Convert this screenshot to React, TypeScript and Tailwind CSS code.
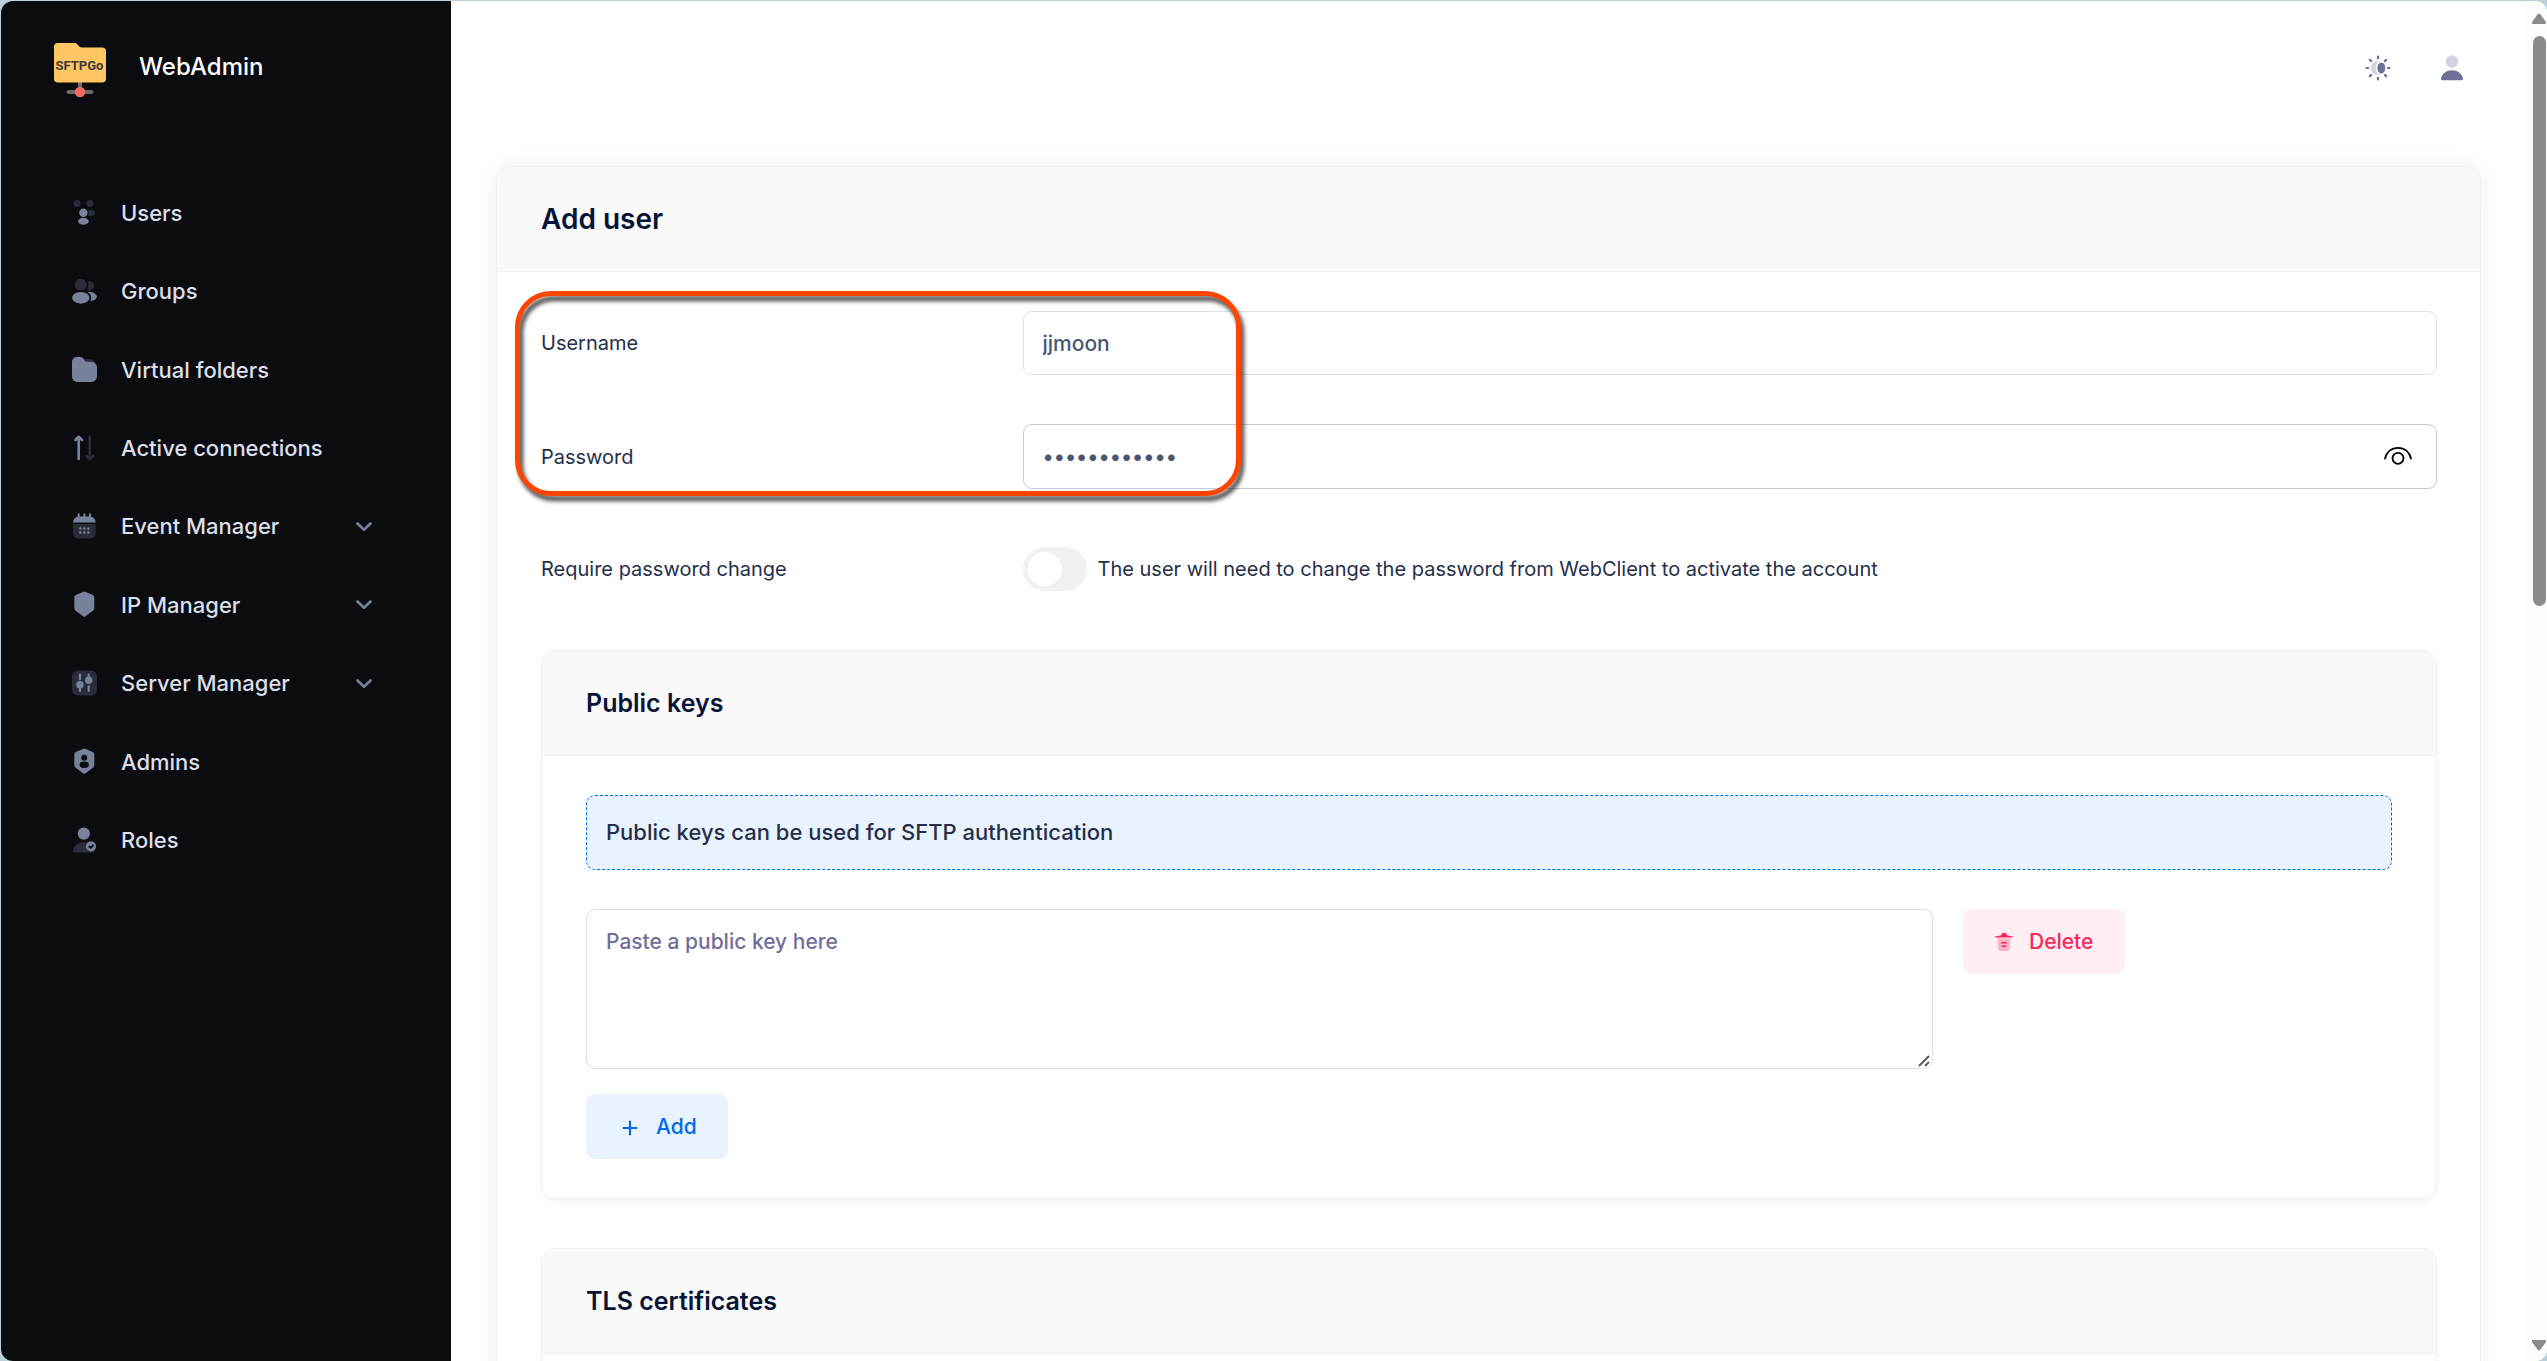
import { useId, type ReactNode } from "react";

const LIGHT = "#78829d";
const DARK = "#2b2c3a";
const SIDEBAR = "#0b0c10";

function NavSvg({ children }: { children: ReactNode }) {
  return (
    <svg className="mb-0.5 h-[26px] w-[26px] shrink-0" viewBox="0 0 26 26" fill={LIGHT} aria-hidden="true">
      {children}
    </svg>
  );
}

const UsersIcon = () => (
  <NavSvg>
    <circle cx="6" cy="4.6" r="3.5" fill={DARK} />
    <circle cx="19" cy="4.6" r="3.5" fill={DARK} />
    <ellipse cx="19.6" cy="14" rx="4.6" ry="3.1" fill={DARK} />
    <circle cx="12.4" cy="13.8" r="4.8" stroke={SIDEBAR} strokeWidth="1.2" />
    <ellipse cx="12.4" cy="22.2" rx="5.3" ry="3.5" />
  </NavSvg>
);

const GroupsIcon = () => (
  <NavSvg>
    <circle cx="18.6" cy="7.8" r="4.6" fill={DARK} />
    <circle cx="9.8" cy="6.8" r="6.8" fill={DARK} stroke={SIDEBAR} strokeWidth="1.6" />
    <ellipse cx="19" cy="18.6" rx="6.8" ry="4.5" />
    <ellipse cx="9.8" cy="19.8" rx="9.6" ry="6.8" stroke={SIDEBAR} strokeWidth="1.8" />
  </NavSvg>
);

const FolderIcon = () => (
  <NavSvg>
    <path d="M11 3h7c3 0 5.500 1.200 6.500 4H13z" fill={DARK} />
    <path d="M1 6.200C1 3 3 1 6.200 1h2.600c1.700 0 3 .9 3.800 2.300C13.500 5 14.500 5.800 16.300 5.800h3.500c3.600 0 6.200 2.500 6.200 6v8C26 23.300 23.800 26 20 26H7c-3.600 0-6-2.300-6-6z" />
  </NavSvg>
);

const ArrowsIcon = () => (
  <NavSvg>
    <g fill="none" strokeWidth="2.600" strokeLinecap="round" strokeLinejoin="round">
      <path d="M7.700 24V2M4.400 5 7.700 1.800 11 5" stroke={LIGHT} />
      <path d="M18.800 1.800V24M15.500 21l3.300 3.200L22.200 21" stroke={DARK} />
    </g>
  </NavSvg>
);

const CalendarIcon = () => (
  <NavSvg>
    <path d="M2 11h22.700v8.500c0 3.600-2.400 6-6 6H8c-3.600 0-6-2.400-6-6z" fill={DARK} />
    <path d="M2 9.500c.3-3.600 2.600-6 6-6h10.700c3.400 0 5.700 2.400 6 6z" />
    <path d="M7.700 1.200v4M13.300 1.200v4M19 1.200v4" stroke={LIGHT} strokeWidth="2" strokeLinecap="round" />
    <g>
      <circle cx="9.300" cy="15.500" r="1.300" />
      <circle cx="13.300" cy="15.500" r="1.300" />
      <circle cx="17.300" cy="15.500" r="1.300" />
      <circle cx="9.300" cy="19.600" r="1.300" />
      <circle cx="13.300" cy="19.600" r="1.300" />
      <circle cx="17.300" cy="19.600" r="1.300" />
    </g>
  </NavSvg>
);

const SHIELD =
  "M11.800 1.100c1-.4 2-.4 3 0l7 3c1 .5 1.500 1.200 1.500 2.300v10.800c0 1-.4 1.800-1.200 2.400l-7.200 5.500c-1 .7-2.200.7-3.200 0l-7.200-5.500c-.8-.6-1.200-1.400-1.200-2.400V6.400c0-1.100.5-1.800 1.500-2.300z";

const ShieldIcon = () => (
  <NavSvg>
    <path d={SHIELD} />
  </NavSvg>
);

const SlidersIcon = () => (
  <NavSvg>
    <rect x="1" y="0.500" width="25" height="25" rx="6" fill={DARK} />
    <path d="M9 4.500v4.800M9 15v6M17.700 4.500V10M17.700 16.300V21" stroke={LIGHT} strokeWidth="2.200" strokeLinecap="round" />
    <circle cx="9" cy="14.800" r="3.700" />
    <circle cx="17.700" cy="10.200" r="3.700" />
  </NavSvg>
);

const AdminIcon = () => (
  <NavSvg>
    <path d={SHIELD} />
    <circle cx="13.200" cy="9.800" r="3" fill={SIDEBAR} />
    <ellipse cx="13.200" cy="16.800" rx="4.700" ry="3.200" fill={SIDEBAR} />
  </NavSvg>
);

const RolesIcon = () => (
  <NavSvg>
    <circle cx="12.800" cy="6.600" r="6.100" />
    <path d="M2 24c.8-5.500 5-8.800 10.700-8.800S22.600 18.500 23.400 24c.1.900-.5 1.500-1.400 1.500H3.400C2.500 25.500 1.900 24.900 2 24z" fill={DARK} />
    <circle cx="20" cy="19.300" r="5.100" />
    <path d="M17.700 19l1.900 1.700L22.500 18" stroke={SIDEBAR} strokeWidth="1.800" fill="none" />
  </NavSvg>
);

const NAV: { label: string; icon: () => ReactNode; expandable?: boolean }[] = [
  { label: "Users", icon: UsersIcon },
  { label: "Groups", icon: GroupsIcon },
  { label: "Virtual folders", icon: FolderIcon },
  { label: "Active connections", icon: ArrowsIcon },
  { label: "Event Manager", icon: CalendarIcon, expandable: true },
  { label: "IP Manager", icon: ShieldIcon, expandable: true },
  { label: "Server Manager", icon: SlidersIcon, expandable: true },
  { label: "Admins", icon: AdminIcon },
  { label: "Roles", icon: RolesIcon },
];

function Logo() {
  return (
    <svg className="h-[56px] w-[54px]" viewBox="0 0 54 56" role="img" aria-label="SFTPGo">
      <path d="M27 39v8" stroke="#6b6b6b" strokeWidth="4" />
      <path d="M15.500 50h23" stroke="#6b6b6b" strokeWidth="4" strokeLinecap="round" />
      <path d="M1 4.500C1 2.500 2.500 1 4.500 1h17c1.200 0 2 .4 2.800 1.200l2.300 2.600c.5.500 1 .7 1.800.7h21c2 0 3.600 1.500 3.600 3.500v28c0 2-1.500 3.500-3.500 3.500h-45C2.500 40.500 1 39 1 37z" fill="#ffc663" />
      <circle cx="27" cy="50" r="5.200" fill="#ed6a5e" />
      <text x="26.500" y="28" textAnchor="middle" fontFamily="Roboto, sans-serif" fontSize="13" fontWeight="700" fill="#3a3a3a">
        SFTPGo
      </text>
    </svg>
  );
}

function Sidebar() {
  return (
    <aside className="flex w-[450px] shrink-0 flex-col bg-[#0b0c10]">
      <a href="#home" className="mt-[41px] ml-[52px] flex items-start gap-8">
        <Logo />
        <span className="mt-[9px] text-[24px] leading-8 font-medium text-white">WebAdmin</span>
      </a>
      <nav className="mt-[76px] flex h-[706px] flex-col">
        {NAV.map(({ label, icon: Icon, expandable }) => {
          const body = (
            <>
              <Icon />
              <span className="ml-6 flex-1 text-left">{label}</span>
              {expandable && (
                <svg className="mr-[79px] h-[10px] w-[16px]" viewBox="0 0 16 10" fill="none" aria-hidden="true">
                  <path d="M1.500 1.500 8 7.700l6.500-6.200" stroke={LIGHT} strokeWidth="2.600" strokeLinecap="round" strokeLinejoin="round" />
                </svg>
              )}
            </>
          );
          const cls = "flex min-h-0 flex-1 items-center pl-[70px] text-[22px] font-medium text-[#dbdfe9]";
          return expandable ? (
            <button key={label} type="button" className={cls}>{body}</button>
          ) : (
            <a key={label} href="#section" className={cls}>{body}</a>
          );
        })}
      </nav>
    </aside>
  );
}

function ThemeIcon() {
  return (
    <svg className="h-[26px] w-[26px]" viewBox="0 0 26 26" aria-hidden="true">
      <g stroke="#706f98" strokeWidth="2.200" strokeLinecap="round">
        <path d="M13 1.500v1.700M13 22.800v1.700M1.500 13h1.700M22.800 13h1.700M4.900 4.900l1.300 1.300M19.800 19.800l1.300 1.300M4.900 21.100l1.300-1.300M19.800 6.200l1.300-1.300" />
      </g>
      <circle cx="12.800" cy="13" r="7" fill="#d4d3e0" />
      <ellipse cx="16.300" cy="13" rx="4.800" ry="6.300" fill="#706f98" stroke="#fff" strokeWidth="1.600" />
    </svg>
  );
}

function ProfileIcon() {
  return (
    <svg className="h-[26px] w-[24px]" viewBox="0 0 24 26" aria-hidden="true">
      <circle cx="12" cy="6.500" r="6.200" fill="#d4d3e0" />
      <path d="M1 23.500C2 18.500 6.500 15.200 12 15.200s10 3.300 11 8.300c.1 1-.5 1.700-1.400 1.700H2.400c-.9 0-1.500-.7-1.400-1.700z" fill="#706f98" />
    </svg>
  );
}

function Panel({ title, children }: { title: string; children?: ReactNode }) {
  return (
    <section className="rounded-[14px] border border-[#f1f1f2] bg-white shadow-[0_5px_10px_rgba(0,0,0,0.03)]">
      <header className="flex h-[105px] items-center rounded-t-[13px] border-b border-[#f1f1f2] bg-[#f9f9f9] px-11">
        <h3 className="text-[25px] leading-8 font-semibold text-[#071437]">{title}</h3>
      </header>
      <div className="px-11 py-[39px]">{children}</div>
    </section>
  );
}

function ScrollBar() {
  return (
    <div className="flex w-5 shrink-0 flex-col items-center bg-[#fcfcfc] pt-3 pb-[10px] pl-1" aria-hidden="true">
      <svg className="h-3 w-4" viewBox="0 0 16 12" fill="#8b8b8b">
        <path d="M6.600 1.200c.8-1 2-1 2.800 0l5.400 7.600c.8 1.200.2 2.200-1.200 2.200H2.400C1 11 .4 10 1.200 8.800z" />
      </svg>
      <div className="mt-[11px] h-[570px] w-[13px] rounded-full bg-[#8b8b8b]" />
      <svg className="mt-auto h-3 w-4" viewBox="0 0 16 12" fill="#8b8b8b">
        <path d="M6.600 10.800c.8 1 2 1 2.800 0l5.400-7.600C15.600 2 15 1 13.600 1H2.400C1 1 .4 2 1.200 3.200z" />
      </svg>
    </div>
  );
}

const labelCls = "text-[20px] leading-[30px] text-[#252f4a]";
const inputCls =
  "w-full rounded-[9px] border bg-white px-[19px] text-[21px] font-medium text-[#4b5675] outline-none";

function AddUserForm() {
  const id = useId();
  return (
    <form className="relative flex flex-col gap-[49px] pt-[39px] pr-[43px] pl-11" onSubmit={(e) => e.preventDefault()}>
      <div className="grid grid-cols-4 items-center gap-x-[30px]">
        <label htmlFor={`${id}-name`} className={labelCls}>Username</label>
        <input id={`${id}-name`} type="text" defaultValue="jjmoon" className={`${inputCls} col-span-3 h-16 border-[#dbdfe9]`} />
      </div>
      <div className="grid grid-cols-4 items-center gap-x-[30px]">
        <label htmlFor={`${id}-pass`} className={labelCls}>Password</label>
        <div className="relative col-span-3">
          <input id={`${id}-pass`} type="password" defaultValue="abcdefghijkl" className={`${inputCls} h-[65px] border-[#c4cada]`} />
          <button type="button" aria-label="Show password" className="absolute top-[21px] right-6">
            <svg className="h-[22px] w-[30px]" viewBox="0 0 30 22" fill="none" stroke="#000" strokeWidth="1.800" strokeLinecap="round" aria-hidden="true">
              <path d="M2 13.500C3.500 7 8.500 2.800 15 2.800S26.500 7 28 13.500" />
              <circle cx="15" cy="13.300" r="5.500" />
            </svg>
          </button>
        </div>
      </div>
      <div className="grid grid-cols-4 items-center gap-x-[30px] pt-[9px]">
        <label htmlFor={`${id}-req`} className={labelCls}>Require password change</label>
        <div className="col-span-3 flex items-center gap-[11px]">
          <input
            id={`${id}-req`}
            type="checkbox"
            role="switch"
            className="flex h-11 w-16 appearance-none items-center rounded-full bg-[#f1f1f4] px-[5px] before:h-[34px] before:w-[34px] before:rounded-full before:bg-white checked:justify-end checked:bg-[#1b84ff]"
          />
          <label htmlFor={`${id}-req`} className={labelCls}>
            The user will need to change the password from WebClient to activate the account
          </label>
        </div>
      </div>

      <div className="flex flex-col gap-[49px] pt-[10px]">
        <Panel title="Public keys">
          <p className="flex h-[75px] items-center rounded-[9px] border border-dashed border-[#006ae6] bg-[#e9f3ff] px-[19px] text-[22px] font-medium text-[#252f4a]">
            Public keys can be used for SFTP authentication
          </p>
          <div className="mt-[39px] grid grid-cols-4 gap-x-[30px]">
            <div className="relative col-span-3">
              <textarea
                aria-label="Public key"
                placeholder="Paste a public key here"
                className="block h-[160px] w-full resize-y rounded-[9px] border border-[#dbdfe9] px-[19px] py-4 text-[21px] leading-8 font-medium text-[#4b5675] placeholder-[#706f98] [&::-webkit-resizer]:hidden"
              />
              <svg className="pointer-events-none absolute right-[3px] bottom-[2px] h-3 w-3" viewBox="0 0 12 12" stroke="#555" strokeWidth="1.800" aria-hidden="true">
                <path d="M1 11 11 1M7 11l4-4" />
              </svg>
            </div>
            <button type="button" className="flex h-[65px] w-[162px] items-center rounded-[9px] bg-[#ffeef3] pl-8 text-[21px] font-medium text-[#f8285a]">
              <svg className="h-5 w-[18px]" viewBox="0 0 18 20" aria-hidden="true">
                <path d="M2.500 6.500h13l-.9 10.300c-.1 1.500-1 2.200-2.300 2.200H5.700c-1.300 0-2.200-.7-2.300-2.200z" fill="#fdb3c5" />
                <path d="M.7 4.200 5.300 3.500c.6 0 .8-.3 1-.9C6.600 1.500 7.200 1 8 1h2c.8 0 1.400.5 1.700 1.600.2.600.4.900 1 .9l4.600.7c.7.200.6 1.300-.1 1.300H.800C.1 5.500 0 4.400.700 4.200z" fill="#f8285a" />
                <path d="M6.700 10.700h4.600M7.300 14.200h3.400" stroke="#f8285a" strokeWidth="1.400" strokeLinecap="round" />
              </svg>
              <span className="ml-4">Delete</span>
            </button>
          </div>
          <button type="button" className="mt-[25px] flex h-[65px] w-[142px] items-center rounded-[9px] bg-[#e9f3ff] pl-9 text-[21px] font-medium text-[#006ae6]">
            <svg className="mt-0.5 h-4 w-4" viewBox="0 0 16 16" stroke="#006ae6" strokeWidth="2.200" strokeLinecap="round" aria-hidden="true">
              <path d="M8 1.500v13M1.500 8h13" />
            </svg>
            <span className="ml-[18px]">Add</span>
          </button>
        </Panel>
        <Panel title="TLS certificates" />
      </div>

      <div
        className="pointer-events-none absolute top-[19px] left-[18px] h-[205px] w-[726px] rounded-[36px] border-[5px] border-[#ff4500] drop-shadow-[3px_5px_2px_rgba(0,0,0,0.75)]"
        aria-hidden="true"
      />
    </form>
  );
}

export default function App() {
  return (
    <div className="h-screen bg-[#b9d2d7] pt-px pl-px font-['Inter',sans-serif]">
      <div className="flex h-full overflow-hidden rounded-xl bg-white">
        <Sidebar />
        <div className="flex min-w-0 flex-1 flex-col overflow-hidden pr-[46px] pl-[45px]">
          <header className="flex h-[165px] shrink-0 items-start justify-end gap-[49px] pt-[54px] pr-[17px]">
            <button type="button" aria-label="Theme"><ThemeIcon /></button>
            <button type="button" aria-label="Account"><ProfileIcon /></button>
          </header>
          <main className="rounded-[14px] border border-[#f1f1f2] bg-white shadow-[0_0_30px_rgba(0,0,0,0.06)]">
            <div className="flex h-[105px] items-center rounded-t-[13px] border-b border-[#f1f1f2] bg-[#f9f9f9] px-11">
              <h1 className="text-[28px] leading-9 font-semibold text-[#071437]">Add user</h1>
            </div>
            <AddUserForm />
          </main>
        </div>
        <ScrollBar />
      </div>
    </div>
  );
}
